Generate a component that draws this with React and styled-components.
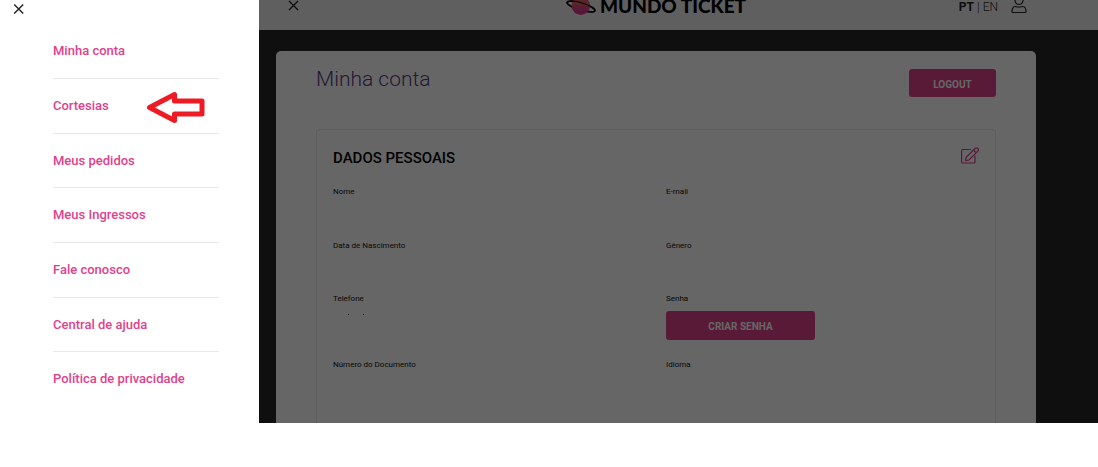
import React from "react";
import styled, { createGlobalStyle } from "styled-components";

const GlobalStyle = createGlobalStyle`
  * {
    box-sizing: border-box;
  }
  body {
    margin: 0;
    background: #fff;
    color: #000;
    font-family: Roboto, "Liberation Sans", sans-serif;
  }
`;

const Screen = styled.div`
  display: flex;
  margin-bottom: 44px;
`;

const Drawer = styled.aside`
  flex: 0 0 259px;
  background: #fff;
`;

const CloseButton = styled.button`
  display: block;
  border: none;
  background: none;
  padding: 0;
  margin: 0 0 0 13px;
  height: 18px;
  cursor: pointer;

  svg {
    display: block;
  }
`;

const Menu = styled.nav`
  display: flex;
  flex-direction: column;
  padding: 6px 40px 0 53px;
`;

const MenuRow = styled.div`
  display: flex;
  align-items: center;
  gap: 36px;
  height: 55px;
  border-bottom: 1px solid #e9e9e9;

  &:nth-child(3n) {
    height: 54px;
  }
  &:last-child {
    height: 53px;
    border-bottom: none;
  }
`;

const MenuLink = styled.a`
  color: #df418c;
  font-size: 13px;
  line-height: 20px;
  font-weight: 500;
  text-decoration: none;
`;

const Page = styled.div`
  position: relative;
  flex: 1;
  min-width: 0;
  background: #262626;
`;

const Backdrop = styled.div`
  position: absolute;
  inset: 0;
  background: rgba(0, 0, 0, 0.6);
`;

const Header = styled.header`
  display: grid;
  grid-template-columns: 1fr auto 1fr;
  height: 30px;
  padding: 0 71px 0 16px;
  background: #eee;
`;

const Brand = styled.a`
  display: flex;
  align-items: flex-start;
  margin-left: 10px;
  color: #000;
  text-decoration: none;
`;

const BrandName = styled.span`
  font-family: Lato, sans-serif;
  font-size: 19px;
  line-height: 12px;
  font-weight: 900;
`;

const Tools = styled.div`
  display: flex;
  justify-content: flex-end;
  gap: 13px;
`;

const Languages = styled.div`
  display: flex;
  gap: 3px;
  color: #262626;
  font-size: 12px;
  line-height: 14px;
  font-weight: 300;
`;

const LanguageLink = styled.a`
  color: #262626;
  font-weight: ${({ $active }) => ($active ? 700 : 300)};
  text-decoration: none;
`;

const Card = styled.main`
  margin: 21px 62px 0 17px;
  padding: 18px 40px 0;
  border-radius: 5px 5px 0 0;
  background: #fff;
`;

const CardHeader = styled.div`
  display: flex;
  justify-content: space-between;
  height: 60px;
`;

const Title = styled.h1`
  margin: 0;
  color: #5e3a87;
  font-size: 21px;
  line-height: 20px;
  font-weight: 300;
`;

const Button = styled.button`
  display: block;
  width: ${({ $wide }) => ($wide ? 149 : 87)}px;
  height: ${({ $wide }) => ($wide ? 29 : 28)}px;
  padding: 2px 0 0;
  border: none;
  border-radius: 3px;
  background: #df418c;
  color: #fff;
  font-family: inherit;
  font-size: 10px;
  font-weight: 700;
  cursor: pointer;
`;

const Panel = styled.section`
  padding: 17px 16px 0;
  border: 1px solid #e9e9e9;
  border-bottom: none;
  border-radius: 4px 4px 0 0;
`;

const PanelHeader = styled.div`
  display: flex;
  justify-content: space-between;
  height: 40px;
`;

const PanelTitle = styled.h2`
  margin: 0;
  font-size: 15px;
  line-height: 22px;
  font-weight: 500;
`;

const IconButton = styled.button`
  width: 18px;
  height: 18px;
  padding: 0;
  border: none;
  background: none;
  color: #df418c;
  cursor: pointer;
`;

const Fields = styled.dl`
  display: grid;
  grid-template-columns: 1fr 1fr;
  grid-template-rows: 54px 53px 66px 63px;
  column-gap: 20px;
  margin: 0;
`;

const Label = styled.dt`
  color: #111;
  font-size: 8px;
  line-height: 10px;
  font-weight: 400;
`;

const Value = styled.dd`
  margin: 7px 0 0;
  color: #262626;
`;

const PhoneMarks = styled.span`
  display: flex;
  gap: 14px;
  padding: 3px 0 0 15px;

  i {
    width: 1px;
    height: 1px;
    background: #555;
  }
`;

const menuItems = [
  "Minha conta",
  "Cortesias",
  "Meus pedidos",
  "Meus Ingressos",
  "Fale conosco",
  "Central de ajuda",
  "Política de privacidade",
];

const fields = [
  { label: "Nome" },
  { label: "E-mail" },
  { label: "Data de Nascimento" },
  { label: "Gênero" },
  {
    label: "Telefone",
    value: (
      <PhoneMarks>
        <i />
        <i />
      </PhoneMarks>
    ),
  },
  { label: "Senha", value: <Button $wide>CRIAR SENHA</Button> },
  { label: "Número do Documento" },
  { label: "Idioma" },
];

const CloseIcon = () => (
  <svg width="12" height="18" viewBox="0 0 12 18" fill="none" stroke="#262626" strokeWidth="1.5">
    <path d="M1.2 4.5l9 9M10.2 4.5l-9 9" />
  </svg>
);

const HeaderCloseIcon = () => (
  <svg width="12" height="18" viewBox="0 0 12 18" fill="none" stroke="#262626" strokeWidth="1.4">
    <path d="M1 1l9 9M10 1l-9 9" />
  </svg>
);

const Arrow = () => (
  <svg width="60" height="34" viewBox="0 0 60 34" fill="none" stroke="#ed1c24" strokeWidth="5" strokeLinejoin="round">
    <path d="M4.500 18.500L29.500 5.500V12H57V25H29.500V31.500Z" />
  </svg>
);

const Planet = () => (
  <svg width="34" height="18" viewBox="0 0 34 18" fill="none">
    <defs>
      <linearGradient id="planet" x1="0" y1="0" x2="0" y2="1">
        <stop offset="0.35" stopColor="#e2606a" />
        <stop offset="0.75" stopColor="#d93b8c" />
      </linearGradient>
    </defs>
    <g stroke="#000" strokeWidth="1.8">
      <ellipse cx="15" cy="6.500" rx="14.500" ry="3.600" transform="rotate(17 15 6.500)" />
    </g>
    <circle cx="14.800" cy="5.700" r="9.200" fill="url(#planet)" />
    <path
      d="M.5 6.500A14.500 3.600 0 0 1 29.500 6.500"
      transform="rotate(17 15 6.500)"
      stroke="#000"
      strokeWidth="1.1"
    />
  </svg>
);

const UserIcon = () => (
  <svg width="16" height="15" viewBox="0 0 16 15" fill="none" stroke="#262626" strokeWidth="1.2">
    <circle cx="8" cy="0.500" r="4" />
    <path d="M4.500 6.500C2 6.500 1 8.500 1 11.500c0 .7.500 1 1 1h12c.6 0 1-.3 1-1 0-3-1-5-3.500-5-1 0-1.500.7-3.500.7s-2.500-.7-3.500-.7z" />
  </svg>
);

const EditIcon = () => (
  <svg width="18" height="17" viewBox="0 0 18 17" fill="none" stroke="currentColor" strokeWidth="1.200">
    <path d="M10 2.500H1.500Q.6 2.500.6 3.500V15Q.6 16 1.500 16H13Q14 16 14 15V8.500" />
    <path d="M5 10.500L14 1.500q1.500-1.300 2.800 0t0 2.700L8 13l-3.300.5zM12.500 3l2.800 2.800" />
  </svg>
);

const App = () => (
  <>
    <GlobalStyle />
    <Screen>
      <Drawer>
        <CloseButton aria-label="Fechar menu">
          <CloseIcon />
        </CloseButton>
        <Menu>
          {menuItems.map((item) => (
            <MenuRow key={item}>
              <MenuLink href="#">{item}</MenuLink>
              {item === "Cortesias" && <Arrow />}
            </MenuRow>
          ))}
        </Menu>
      </Drawer>
      <Page>
        <Header>
          <CloseButton aria-label="Fechar">
            <HeaderCloseIcon />
          </CloseButton>
          <Brand href="#">
            <Planet />
            <BrandName>MUNDO TICKET</BrandName>
          </Brand>
          <Tools>
            <Languages>
              <LanguageLink href="#" $active>PT</LanguageLink>
              <span>|</span>
              <LanguageLink href="#">EN</LanguageLink>
            </Languages>
            <UserIcon />
          </Tools>
        </Header>
        <Card>
          <CardHeader>
            <Title>Minha conta</Title>
            <Button>LOGOUT</Button>
          </CardHeader>
          <Panel>
            <PanelHeader>
              <PanelTitle>DADOS PESSOAIS</PanelTitle>
              <IconButton aria-label="Editar dados">
                <EditIcon />
              </IconButton>
            </PanelHeader>
            <Fields>
              {fields.map(({ label, value }) => (
                <div key={label}>
                  <Label>{label}</Label>
                  {value && <Value>{value}</Value>}
                </div>
              ))}
            </Fields>
          </Panel>
        </Card>
        <Backdrop />
      </Page>
    </Screen>
  </>
);

export default App;
